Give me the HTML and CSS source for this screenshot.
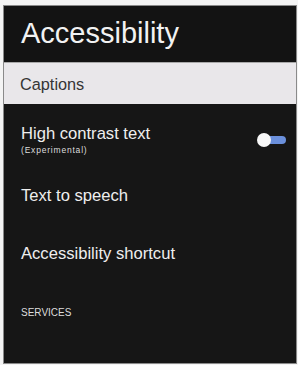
FILE: index.html
```html
<!DOCTYPE html>
<html lang="en">
<head>
<meta charset="utf-8">
<title>Accessibility</title>
<link rel="stylesheet" href="styles.css">
</head>
<body>
<div class="panel">
  <header class="header">
    <h1 class="title">Accessibility</h1>
  </header>
  <div class="selected">Captions</div>
  <ul class="list">
    <li class="row row-toggle">
      <div class="labels">
        <div class="label">High contrast text</div>
        <div class="sublabel">(Experimental)</div>
      </div>
      <span class="toggle"><span class="track"></span><span class="thumb"></span></span>
    </li>
    <li class="row"><div class="label">Text to speech</div></li>
    <li class="row"><div class="label">Accessibility shortcut</div></li>
  </ul>
  <div class="section">SERVICES</div>
</div>
</body>
</html>
```
FILE: styles.css
```css
html, body {
  margin: 0;
  padding: 0;
}
body {
  width: 298px;
  height: 365px;
  background: #f4f4f4;
  font-family: "Liberation Sans", Arial, sans-serif;
  overflow: hidden;
}
.panel {
  margin: 6px 2px 0 4px;
  width: 292px;
  height: 357px;
  background: #161616;
  box-shadow: 0 0 0 1px #8a8a8a;
  display: flex;
  flex-direction: column;
}
.header {
  background: #131313;
  height: 56px;
  padding: 9px 0 0 17px;
  box-sizing: border-box;
}
.title {
  margin: 0;
  font-weight: normal;
  font-size: 29px;
  line-height: 36px;
  color: #f2f2f2;
}
.selected {
  background: #e9e7ea;
  color: #353535;
  font-size: 16.3px;
  line-height: 20px;
  height: 42px;
  box-sizing: border-box;
  padding: 11px 0 0 16px;
  border-top: 1px solid #a9a9a9;
}
.list {
  list-style: none;
  margin: 0;
  padding: 0;
}
.row {
  padding: 19px 10px 19px 17px;
  color: #eeeeee;
}
.row-toggle {
  padding-top: 20px;
  padding-bottom: 11px;
  display: flex;
  align-items: center;
  justify-content: space-between;
}
.label {
  font-size: 16.6px;
  line-height: 20px;
}
.row + .row {
  padding-top: 20px;
  padding-bottom: 18px;
}
.sublabel {
  margin-top: 1px;
  font-size: 8.5px;
  line-height: 10px;
  letter-spacing: 0.8px;
  color: #dddddd;
}
.toggle {
  position: relative;
  width: 29px;
  height: 14px;
  margin-top: 1px;
}
.track {
  position: absolute;
  right: 0;
  top: 3px;
  width: 24px;
  height: 8px;
  border-radius: 4px;
  background: #6b90dc;
}
.thumb {
  position: absolute;
  left: 0;
  top: 0;
  width: 14px;
  height: 14px;
  border-radius: 50%;
  background: #f7f7f7;
}
.section {
  margin-top: 25px;
  padding-left: 17px;
  font-size: 10px;
  line-height: 12px;
  color: #dcdcdc;
}
```
